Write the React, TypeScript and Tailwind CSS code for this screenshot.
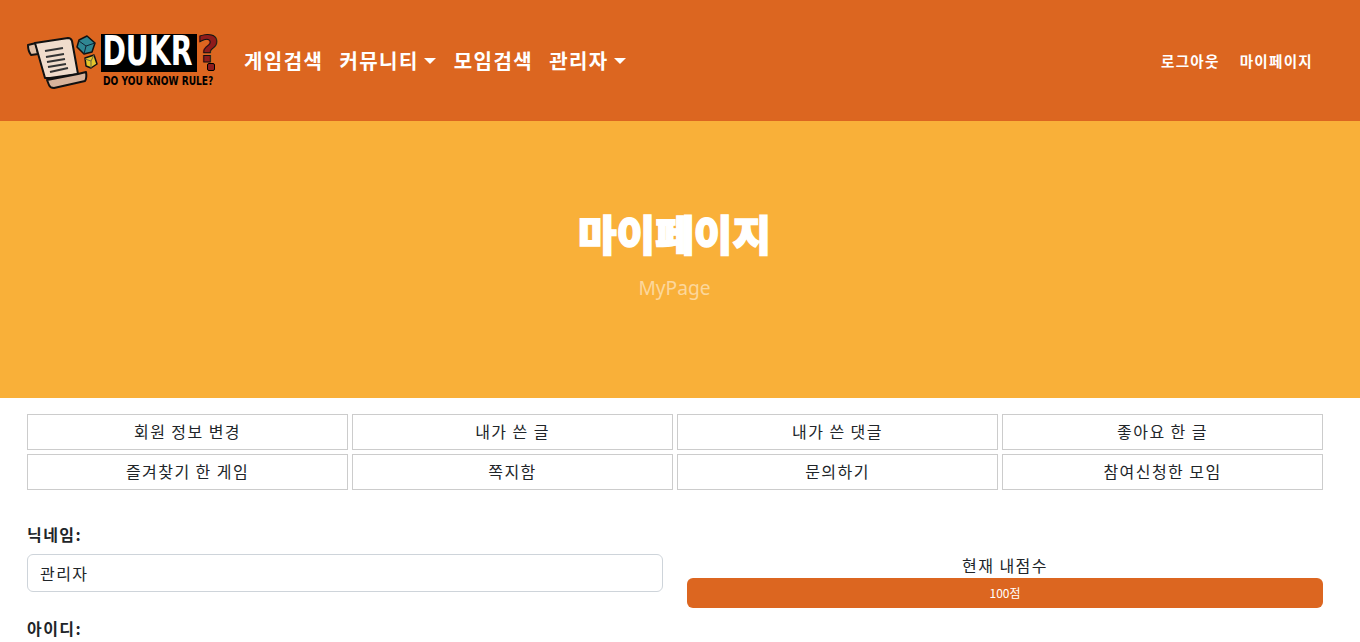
import React from "react";

const font = "font-['Noto_Sans_CJK_KR','Noto_Sans',sans-serif]";

const menus = [
  "회원 정보 변경",
  "내가 쓴 글",
  "내가 쓴 댓글",
  "좋아요 한 글",
  "즐겨찾기 한 게임",
  "쪽지함",
  "문의하기",
  "참여신청한 모임",
];

function Caret() {
  return (
    <span className="mr-[2px] ml-[5px] inline-block h-0 w-0 border-x-[6px] border-t-[6px] border-x-transparent border-t-white" />
  );
}

function Logo() {
  return (
    <div className="flex h-[62px] w-[193px] shrink-0 items-start">
      <svg width="74" height="62" viewBox="0 0 74 62" className="shrink-0">
        {/* scroll */}
        <path d="M1 15 L9 13 L11 24 L4 25 Q1 21 1 15Z" fill="#dfc0a8" stroke="#111" strokeWidth="2" strokeLinejoin="round" />
        <path d="M8 13 L41 8 Q44 8 45 11 L51 44 L23 48 L18 48 Z" fill="#f0dccc" stroke="#111" strokeWidth="2" strokeLinejoin="round" />
        <path d="M20 50 L51 44 L59 42 Q60 48 58 51 L27 58 Q23 58 22 55 Z" fill="#d8b49c" stroke="#111" strokeWidth="2" strokeLinejoin="round" />
        <path d="M18 21 L36 18 M19 27 L37 24 M20 32 L38 29 M21 37 L39 34 M23 42 L41 38" stroke="#333" strokeWidth="2.2" />
        {/* teal die */}
        <path d="M60 6 L68 13 L65 22 L57 24 L50 17 L52 10Z" fill="#2f8793" stroke="#111" strokeWidth="1.5" strokeLinejoin="round" />
        <path d="M52 11 L59 16 L68 13 M59 16 L57 24" fill="none" stroke="#123" strokeWidth="1" />
        {/* yellow die */}
        <path d="M67 25 L70 34 L64 38 L59 36 L58 28Z" fill="#e3c52c" stroke="#111" strokeWidth="1.5" strokeLinejoin="round" />
        <path d="M58 29 L64 31 L67 25 M64 31 L64 38" fill="none" stroke="#664" strokeWidth="1" />
      </svg>
      <div className="flex flex-col pt-[4px]">
        <div className="flex h-[38px] items-start">
          <span className="block h-[38px] w-[96px] bg-black">
            <span className="block w-[96px] origin-left pl-[2px] font-['DejaVu_Sans',sans-serif] text-[41px] leading-[34px] font-bold tracking-normal whitespace-nowrap text-white [transform:scaleX(0.69)]">
              DUKR
            </span>
          </span>
          <div className="flex flex-col items-center">
            <span className="block font-['DejaVu_Sans',sans-serif] text-[38px] leading-[30px] font-bold tracking-normal text-[#8f1c1c] [-webkit-text-stroke:1px_#111]">
              ?
            </span>
            <span className="mt-[-1px] ml-[6px] block h-[8px] w-[8px] rounded-[2px] border border-black bg-[#8f1c1c]" />
          </div>
        </div>
        <span className="mt-[2px] ml-[2px] origin-left font-['DejaVu_Sans',sans-serif] text-[13px] leading-[13px] font-bold tracking-normal whitespace-nowrap text-black [transform:scaleX(0.7)]">
          DO YOU KNOW RULE?
        </span>
      </div>
    </div>
  );
}

export default function App() {
  return (
    <div className={`${font} h-[642px] overflow-hidden bg-white tracking-[0.09em] text-[#212529]`}>
      <header className="flex h-[121px] items-center bg-[#dc6620] pr-[47px] pl-[27px]">
        <Logo />
        <nav className="ml-[24px] flex items-center gap-[16px] text-[20px] font-bold text-white">
          <a>게임검색</a>
          <a className="flex items-center">커뮤니티<Caret /></a>
          <a>모임검색</a>
          <a className="flex items-center">관리자<Caret /></a>
        </nav>
        <div className="ml-auto flex gap-[20px] text-[14.6px] font-bold tracking-[0.085em] text-white">
          <a>로그아웃</a>
          <a>마이페이지</a>
        </div>
      </header>

      <section className="flex h-[277px] flex-col items-center bg-[#f9b039] pt-[84px] pr-[11px]">
        <h1 className="text-[42px] leading-[56px] font-black tracking-normal text-white [-webkit-text-stroke:1.5px_#fff]">마이페이지</h1>
        <p className="mt-[13px] font-['Noto_Sans',sans-serif] text-[19.2px] leading-[28px] tracking-normal text-white/50">MyPage</p>
      </section>

      <main className="pt-[16px] pr-[37px] pl-[27px]">
        <div className="grid grid-cols-4 gap-x-[4px] gap-y-[4px]">
          {menus.map((menu) => (
            <button key={menu} className="h-[36px] border border-[#ccc] bg-white pb-[2px] text-center text-[16px] leading-[32px] tracking-[0.09em]">
              {menu}
            </button>
          ))}
        </div>

        <div className="mt-[32px] grid grid-cols-2 gap-x-[24px]">
          <div>
            <label className="block text-[16px] leading-[24px] font-bold">닉네임:</label>
            <input
              readOnly
              value="관리자"
              className="mt-[8px] block h-[38px] w-full rounded-[6px] border border-[#ced4da] bg-white px-[12px] text-[16px] tracking-[0.09em] outline-none"
            />
            <label className="mt-[24px] block text-[16px] leading-[24px] font-bold">아이디:</label>
          </div>
          <div className="pt-[31px]">
            <p className="text-center text-[16px] leading-[24px]">현재 내점수</p>
            <div className="mt-[1px] flex h-[30px] items-center justify-center rounded-[6px] bg-[#dc6620] text-[12px] tracking-normal text-white">100점</div>
          </div>
        </div>
      </main>
    </div>
  );
}
